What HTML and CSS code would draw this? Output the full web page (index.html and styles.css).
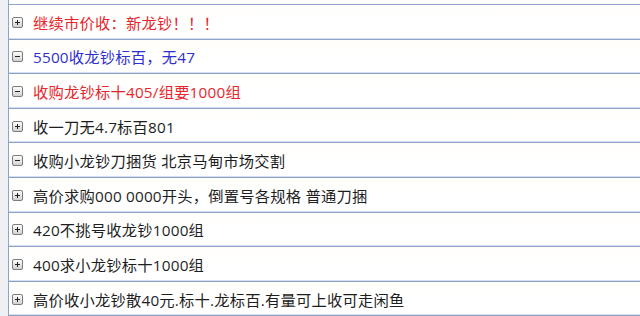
FILE: index.html
```html
<!DOCTYPE html>
<html lang="zh">
<head>
<meta charset="utf-8">
<link rel="stylesheet" href="styles.css">
</head>
<body>
<div class="page">
  <div class="gutter"></div>
  <div class="list">
    <div class="top"></div>
    <div class="row red"><span class="ico plus"></span><span class="txt">继续市价收：新龙钞！！！</span></div>
    <div class="row blue"><span class="ico minus"></span><span class="txt">5500收龙钞标百，无47</span></div>
    <div class="row red"><span class="ico minus"></span><span class="txt">收购龙钞标十405/组要1000组</span></div>
    <div class="row"><span class="ico plus"></span><span class="txt">收一刀无4.7标百801</span></div>
    <div class="row"><span class="ico minus"></span><span class="txt">收购小龙钞刀捆货 北京马甸市场交割</span></div>
    <div class="row"><span class="ico plus"></span><span class="txt">高价求购000 0000开头，倒置号各规格 普通刀捆</span></div>
    <div class="row"><span class="ico plus"></span><span class="txt">420不挑号收龙钞1000组</span></div>
    <div class="row"><span class="ico plus"></span><span class="txt">400求小龙钞标十1000组</span></div>
    <div class="row"><span class="ico plus"></span><span class="txt">高价收小龙钞散40元.标十.龙标百.有量可上收可走闲鱼</span></div>
  </div>
</div>
</body>
</html>
```
FILE: styles.css
```css
html, body { margin: 0; padding: 0; background: #fff; }
.page {
  display: flex;
  width: 640px;
  height: 316px;
  overflow: hidden;
}
.gutter {
  width: 8px;
  flex: none;
  background: #eef0f4;
  border-right: 1px solid #8ea3c8;
}
.list { flex: 1; display: flex; flex-direction: column; }
.top {
  flex: none;
  border-bottom: 1px solid #8ea3c8;
  box-sizing: border-box;
  height: 5px;
}
.row {
  flex: none;
  height: 34.6px;
  box-sizing: border-box;
  border-bottom: 1px solid #8ea3c8;
  box-shadow: inset 0 -1px 0 #d4def0;
  display: flex;
  align-items: center;
  padding-left: 3px;
  font-family: "Open Sans", "Noto Sans CJK SC", sans-serif;
  font-size: 15.3px;
  letter-spacing: 0.2px;
  color: #1e1e1e;
  background: linear-gradient(#fffefa, #fff 50%);
}
.row.red { color: #e8252b; }
.row.blue { color: #2d2fd0; }
.ico {
  width: 9px;
  height: 9px;
  flex: none;
  border: 1px solid #7c7c7c;
  border-radius: 2px;
  background: linear-gradient(#fdfdfd, #d2d2d2);
  position: relative;
  margin-right: 10px;
  margin-top: 1px;
}
.ico::before {
  content: "";
  position: absolute;
  left: 2px;
  top: 4px;
  width: 5px;
  height: 1px;
  background: #222;
}
.ico.plus::after {
  content: "";
  position: absolute;
  left: 4px;
  top: 2px;
  width: 1px;
  height: 5px;
  background: #222;
}
.txt { white-space: nowrap; }
```
